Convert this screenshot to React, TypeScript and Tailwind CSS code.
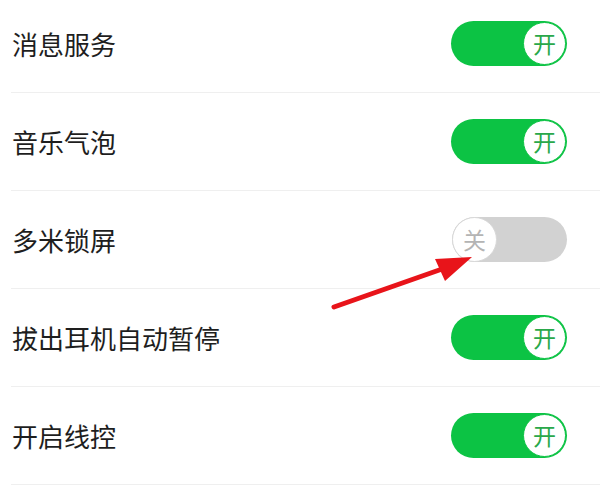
// Settings list with on/off switches and a red pointer arrow

const ROWS: { label: string; on: boolean }[] = [
  { label: "消息服务", on: true },
  { label: "音乐气泡", on: true },
  { label: "多米锁屏", on: false },
  { label: "拔出耳机自动暂停", on: true },
  { label: "开启线控", on: true },
];

const FONT = { fontFamily: '"Noto Sans CJK SC", "Noto Sans", sans-serif' };

function Toggle({ on }: { on: boolean }) {
  if (on) {
    return (
      <div className="w-[116px] h-[45px] rounded-full bg-[#0cc344] flex items-center justify-end p-px shrink-0">
        <div className="w-[43px] h-[43px] rounded-full bg-white border-[1.5px] border-[#0cc344] flex items-center justify-center text-[#2aa84a] text-[23px] leading-none">
          开
        </div>
      </div>
    );
  }
  return (
    <div className="w-[115px] h-[45px] rounded-full bg-[#d2d2d2] flex items-center justify-start shrink-0">
      <div className="w-[45px] h-[45px] rounded-full bg-white border-[1.5px] border-[#d8d8d8] flex items-center justify-center text-[#b4b4b4] text-[23px] leading-none">
        关
      </div>
    </div>
  );
}

export default function App() {
  return (
    <div className="relative w-[600px] h-[487px] bg-white overflow-hidden" style={FONT}>
      <div className="-mt-[5px]">
        {ROWS.map((row) => (
          <div key={row.label} className="ml-[11px] h-[98px] border-b border-[#efefef] flex items-center pl-px pr-[33px]">
            <span className="flex-1 text-[26px] text-[#1e1e1e] leading-none">{row.label}</span>
            <Toggle on={row.on} />
          </div>
        ))}
      </div>

      {/* red pointer arrow */}
      <svg className="absolute left-0 top-0 pointer-events-none" width="600" height="487" viewBox="0 0 600 487">
        <line x1="334" y1="307" x2="445" y2="268" stroke="#e8141a" strokeWidth="5" strokeLinecap="round" />
        <polygon points="472,257 435,259 445,281" fill="#e8141a" />
      </svg>
    </div>
  );
}
